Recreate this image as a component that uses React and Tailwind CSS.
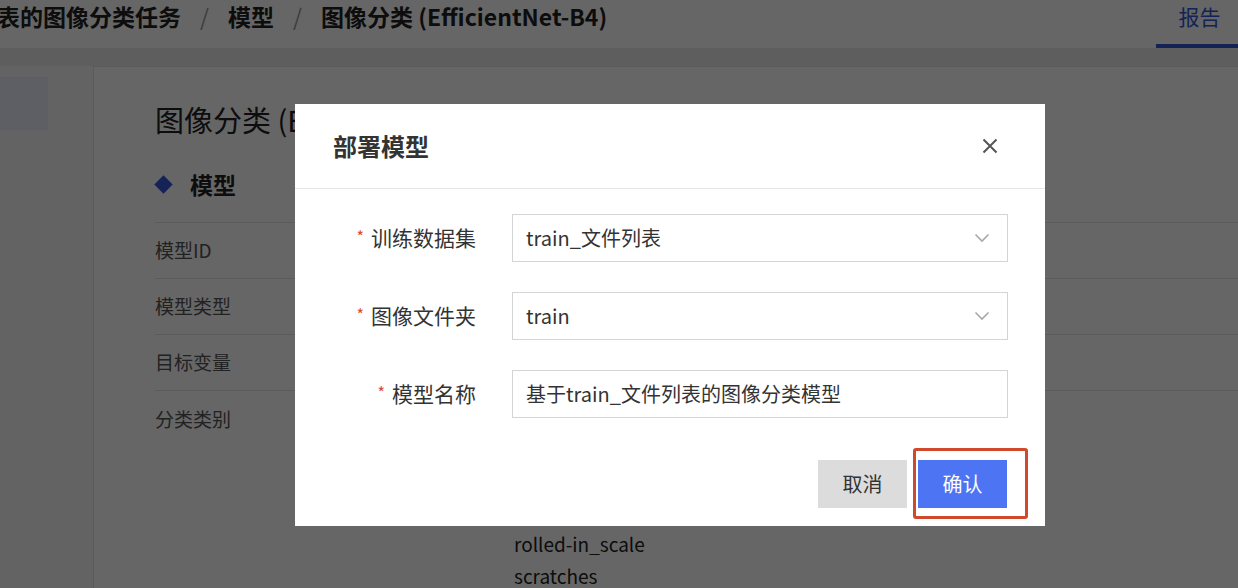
import { useState } from 'react'

const categories = ['crazing', 'inclusion', 'patches', 'pitted_surface', 'rolled-in_scale', 'scratches']

const infoRows = [
  { label: '模型ID', value: '2f6a9c1e-03b7-4d1a-9e52-b7c08a1f64d3' },
  { label: '模型类型', value: '图像分类' },
  { label: '目标变量', value: 'label' },
]

const Chevron = () => (
  <svg width="16" height="10" viewBox="0 0 16 10" className="shrink-0">
    <polyline points="1.5,1.5 8,8 14.5,1.5" fill="none" stroke="#a8a8a8" strokeWidth="1.6" />
  </svg>
)

const FormRow = ({ label, value, select }) => (
  <div className="flex items-center">
    <div className="w-[181px] flex justify-end items-center">
      <span className="text-[#e0453a] text-[16px] mr-[7px] -mt-[4px]">*</span>
      <span className="text-[21px] text-[#333]">{label}</span>
    </div>
    <div className="ml-[36px] w-[496px] h-[48px] border border-[#d4d4d4] flex items-center justify-between pl-[13px] pr-[17px]">
      <span className="text-[20px] text-[#333]">{value}</span>
      {select && <Chevron />}
    </div>
  </div>
)

export default function App() {
  const [open, setOpen] = useState(true)

  return (
    <div className="relative w-full h-[588px] overflow-hidden bg-[#f7f7f7] font-['Noto_Sans_CJK_SC','Noto_Sans',sans-serif]">
      {/* Header */}
      <div className="h-[48px] bg-white flex justify-between">
        <div className="flex items-start -mt-[1px] -ml-[3px] text-[23px] font-bold text-[#222] whitespace-nowrap">
          <span>表的图像分类任务</span>
          <span className="mx-[19px] font-normal text-[#9a9a9a]">/</span>
          <span>模型</span>
          <span className="mx-[19px] font-normal text-[#9a9a9a]">/</span>
          <span>图像分类 (EfficientNet-B4)</span>
        </div>
        <div className="w-[82px] flex flex-col justify-between items-center">
          <span className="text-[21px] text-[#3456d8] pt-[1px] pl-[5px]">报告</span>
          <div className="h-[4px] w-full bg-[#3456d8]" />
        </div>
      </div>
      <div className="h-[18px] bg-[#ececec]" />

      {/* Body */}
      <div className="flex">
        <div className="w-[93px] shrink-0 pt-[11px]">
          <div className="w-[48px] h-[53px] bg-[#eceefa]" />
        </div>
        <div className="flex-1 bg-white border-l border-t border-[#e2e2e2] h-[560px] pl-[61px] pt-[34px]">
          <h1 className="text-[29px] leading-[36px] text-[#222]">图像分类 (EfficientNet-B4)</h1>
          <div className="flex items-center mt-[32px] mb-[23px] h-[30px]">
            <span className="w-[13px] h-[13px] bg-[#3456d8] rotate-45 ml-[2px]" />
            <span className="ml-[20px] text-[23px] font-bold text-[#222]">模型</span>
          </div>
          {infoRows.map((row) => (
            <div key={row.label} className="h-[56px] border-t border-[#e6e6e6] flex items-center text-[19px]">
              <span className="w-[359px] text-[#555]">{row.label}</span>
              <span className="text-[#222]">{row.value}</span>
            </div>
          ))}
          <div className="border-t border-[#e6e6e6] flex pt-[9px] text-[19px]">
            <span className="w-[359px] text-[#555] leading-[32px] pt-[3px]">分类类别</span>
            <div className="flex flex-col text-[#222] leading-[32px]">
              {categories.map((c) => (
                <span key={c}>{c}</span>
              ))}
            </div>
          </div>
        </div>
      </div>

      {/* Modal */}
      {open && (
        <>
          <div className="absolute inset-0 bg-black/60" />
          <div className="absolute left-[295px] top-[104px] w-[750px] bg-white">
            <div className="h-[85px] border-b border-[#e6e6e6] flex items-center justify-between pl-[38px] pr-[46px]">
              <span className="text-[24px] font-bold text-[#333]">部署模型</span>
              <button onClick={() => setOpen(false)} className="w-[18px] h-[18px] flex items-center justify-center">
                <svg width="16" height="16" viewBox="0 0 16 16">
                  <path d="M1.5 1.5 L14.5 14.5 M14.5 1.5 L1.5 14.5" stroke="#555" strokeWidth="2" fill="none" />
                </svg>
              </button>
            </div>
            <div className="pt-[25px] flex flex-col gap-[30px]">
              <FormRow label="训练数据集" value="train_文件列表" select />
              <FormRow label="图像文件夹" value="train" select />
              <FormRow label="模型名称" value="基于train_文件列表的图像分类模型" />
            </div>
            <div className="flex justify-end gap-[11px] pr-[38px] pt-[42px] pb-[18px]">
              <button className="w-[89px] h-[48px] bg-[#dcdcdc] text-[20px] text-[#333]">取消</button>
              <button className="w-[89px] h-[48px] bg-[#4d74f2] text-[20px] text-white">确认</button>
            </div>
          </div>
          <div className="absolute left-[913px] top-[448px] w-[115px] h-[71px] border-[3px] border-[#d1492c] rounded-[3px]" />
        </>
      )}
    </div>
  )
}
